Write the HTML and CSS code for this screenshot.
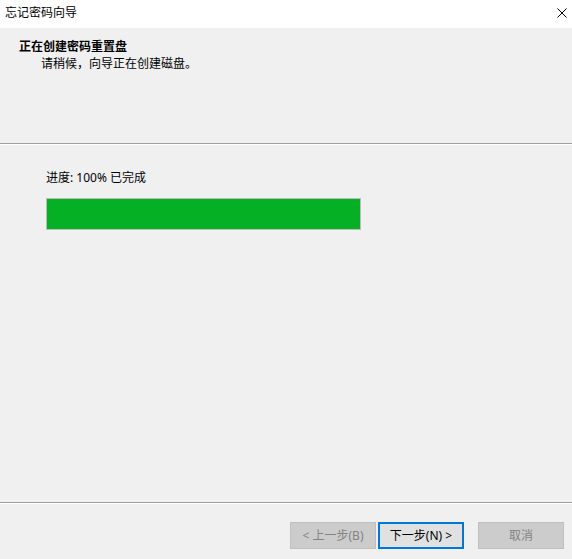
FILE: index.html
```html
<!DOCTYPE html>
<html lang="zh-CN">
<head>
<meta charset="utf-8">
<title>忘记密码向导</title>
<link rel="stylesheet" href="styles.css">
</head>
<body>
<div class="window">
  <div class="titlebar">
    <span class="title">忘记密码向导</span>
    <span class="close">
      <svg width="10" height="10" viewBox="0 0 10 10"><path d="M0.5 0.5 L9.5 9.5 M9.5 0.5 L0.5 9.5" stroke="#000" stroke-width="1" fill="none"/></svg>
    </span>
  </div>
  <div class="header">
    <div class="heading">正在创建密码重置盘</div>
    <div class="subheading">请稍候，向导正在创建磁盘。</div>
  </div>
  <div class="sep"></div>
  <div class="content">
    <div class="progress-label">进度: 100% 已完成</div>
    <div class="progress"><div class="progress-fill" style="width:100%"></div></div>
  </div>
  <div class="sep"></div>
  <div class="footer">
    <div class="btn disabled">&lt; 上一步(B)</div>
    <div class="btn primary">下一步(N) &gt;</div>
    <div class="btn disabled cancel">取消</div>
  </div>
</div>
</body>
</html>
```

FILE: styles.css
```css
html, body {
  margin: 0;
  padding: 0;
}
body {
  font-family: "Noto Sans", "Noto Sans CJK SC", sans-serif;
  font-size: 12px;
  color: #000;
  background: #f0f0f0;
}
.window {
  width: 572px;
  height: 559px;
  display: flex;
  flex-direction: column;
  background: #f0f0f0;
}
.titlebar {
  height: 28px;
  background: #fff;
  display: flex;
  align-items: center;
  justify-content: space-between;
  padding: 0 5px 2px 5px;
  box-sizing: border-box;
}
.title {
  line-height: 16px;
}
.close {
  display: flex;
  width: 10px;
  height: 10px;
  margin-right: 0;
}
.header {
  height: 115px;
  box-sizing: border-box;
  padding: 10px 0 0 19px;
  line-height: 17px;
}
.heading {
  font-weight: bold;
}
.subheading {
  padding-left: 22px;
}
.sep {
  height: 1px;
  background: #a0a0a0;
  border-bottom: 1px solid #ffffff;
}
.content {
  flex: 1;
  padding: 24px 0 0 46px;
}
.progress-label {
  line-height: 17px;
}
.progress {
  margin-top: 12px;
  width: 315px;
  height: 32px;
  box-sizing: border-box;
  border: 1px solid #bcbcbc;
  background: #e6e6e6;
}
.progress-fill {
  height: 100%;
  background: #06b025;
}
.footer {
  display: flex;
  justify-content: flex-end;
  padding: 18px 8px 10px 0;
}
.btn {
  width: 86px;
  height: 27px;
  box-sizing: border-box;
  display: flex;
  align-items: center;
  justify-content: center;
  line-height: 16px;
  border: 1px solid #adadad;
  background: #e1e1e1;
}
.btn.disabled {
  background: #cccccc;
  border-color: #bfbfbf;
  color: #838383;
}
.btn.primary {
  border: 2px solid #0078d7;
  margin-left: 2px;
}
.btn.cancel {
  margin-left: 14px;
}
```
